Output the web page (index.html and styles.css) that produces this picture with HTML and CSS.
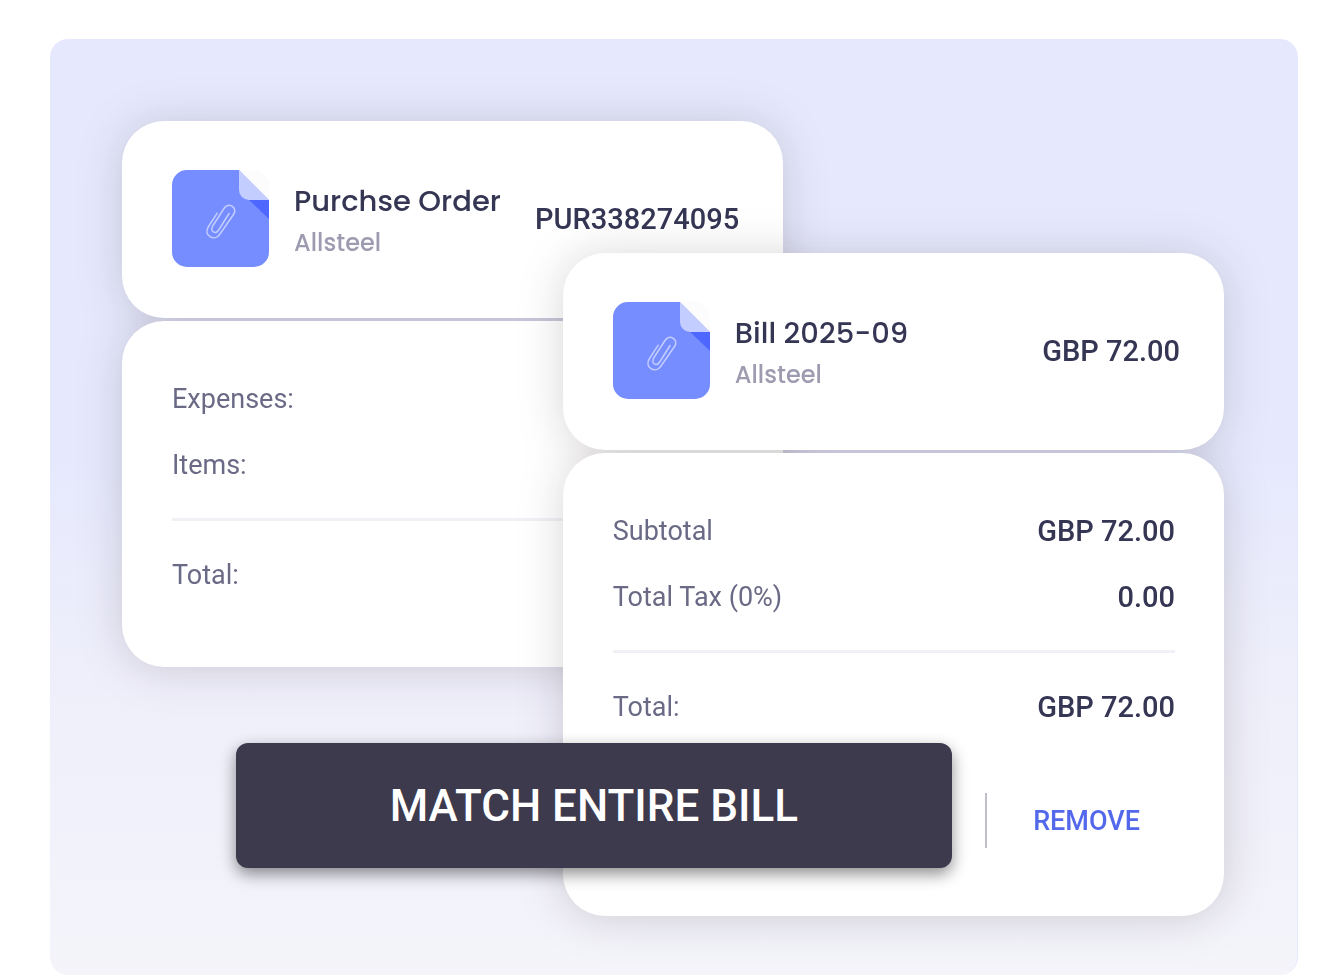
FILE: index.html
```
<!DOCTYPE html>
<html lang="en">
    <head>
        <meta charset="UTF-8">
        <meta name="viewport" content="width=device-width, initial-scale=1.0">
        <title>Match bill</title>
        <link rel="stylesheet" href="styles.css">
    </head>
    <body>
        <svg width="0" height="0" class="symbols" aria-hidden="true">
            <symbol id="file-icon" viewBox="0 0 97 97">
                <path fill="#768dff" d="M15 0H67L97 30V82A15 15 0 0 1 82 97H15A15 15 0 0 1 0 82V15A15 15 0 0 1 15 0Z"/>
                <path fill="#fcfcfd" d="M67 0H82A15 15 0 0 1 97 15V30Z"/>
                <path fill="#4e68ff" d="M77 30H97V49Z"/>
                <path fill="#c3cdff" d="M67 0L97 30H77A10 10 0 0 1 67 20Z"/>
                <path fill="none" stroke="#c3cdff" stroke-width="1.5" stroke-linecap="round" stroke-linejoin="round"
                    d="M45.2 43.2L36.5 56.5C34 60.5 34.500 64.500 38 66.700C41.500 68.800 45.500 67.800 48 64L61.500 44.500C63.500 41.500 63.200 38.200 60.300 36.300C57.300 34.500 54 35.500 52 38.500L41 55.500C39.200 58.300 39.500 60.800 41.300 61.900C43.200 63 45.200 62.300 46.700 60L57 43.500"/>
            </symbol>
        </svg>

        <main class="panel">
            <div class="stage">
                <section class="document order">
                    <header class="card document-head">
                        <svg class="file-icon" aria-hidden="true"><use href="#file-icon"/></svg>
                        <div class="document-name">
                            <h2>Purchse Order</h2>
                            <p>Allsteel</p>
                        </div>
                        <span class="amount">PUR338274095</span>
                    </header>
                    <div class="card document-body">
                        <dl>
                            <div class="row"><dt>Expenses:</dt><dd></dd></div>
                            <div class="row"><dt>Items:</dt><dd></dd></div>
                            <div class="row total"><dt>Total:</dt><dd></dd></div>
                        </dl>
                    </div>
                </section>

                <section class="document bill">
                    <header class="card document-head">
                        <svg class="file-icon" aria-hidden="true"><use href="#file-icon"/></svg>
                        <div class="document-name">
                            <h2>Bill 2025-09</h2>
                            <p>Allsteel</p>
                        </div>
                        <span class="amount">GBP 72.00</span>
                    </header>
                    <div class="card document-body">
                        <dl>
                            <div class="row"><dt>Subtotal</dt><dd>GBP 72.00</dd></div>
                            <div class="row"><dt>Total Tax (0%)</dt><dd>0.00</dd></div>
                            <div class="row total"><dt>Total:</dt><dd>GBP 72.00</dd></div>
                        </dl>
                        <div class="actions">
                            <button type="button" class="remove-button">REMOVE</button>
                        </div>
                    </div>
                </section>

                <button type="button" class="match-button">MATCH ENTIRE BILL</button>
            </div>
        </main>
    </body>
</html>
```

FILE: styles.css
```
* {
    box-sizing: border-box;
}
body {
    margin: 0;
    background: #fff;
    color: #353554;
    font-family: Roboto, sans-serif;
}
h2, p, dl, dd {
    margin: 0;
}
button {
    border: none;
    font-family: inherit;
    font-weight: 500;
    cursor: pointer;
}
.symbols {
    position: absolute;
}
.panel {
    margin: 39px 40px 0 50px;
    padding: 82px 73px 59px 72px;
    border-right: 1px solid #e6e9fd;
    border-radius: 18px;
    background: linear-gradient(#e6e9fd 0%, #e6e9fd 45%, #efeffb 68%, #f1f1fb 84%, #f4f4fa 100%);
}
.stage {
    position: relative;
    display: grid;
    grid-template-columns: 2fr 1fr 2fr;
    align-items: start;
}
.document {
    display: grid;
    gap: 3px;
    grid-row: 1;
    filter: drop-shadow(0 2px 22px rgba(30, 10, 20, 0.17));
}
.order {
    grid-column: 1 / 3;
}
.bill {
    grid-column: 2 / 4;
    margin-top: 132px;
}
.card {
    border-radius: 42px;
    background: #fff;
}
.document-head {
    display: flex;
    align-items: center;
    gap: 25px;
    padding: 49px 44px 51px 50px;
}
.file-icon {
    flex: none;
    width: 97px;
    height: 97px;
}
.document-name {
    flex: 1;
    padding-top: 6px;
    font-family: Poppins, Inter, sans-serif;
    white-space: nowrap;
}
.document-name h2 {
    font-size: 29px;
    line-height: 42px;
    font-weight: 500;
}
.document-name p {
    color: #9d9bb0;
    font-size: 24px;
    line-height: 42px;
    font-weight: 500;
}
.amount, dd {
    font-size: 29px;
    font-weight: 500;
}
.document-body {
    padding: 45px 49px 59px 50px;
}
.row {
    display: flex;
    align-items: center;
    justify-content: space-between;
    line-height: 66px;
}
.row dt {
    color: #6a6a86;
    font-size: 27px;
}
.total {
    margin-top: 20px;
    padding-top: 21px;
    border-top: 3px solid #f1f1f5;
}
.actions {
    display: flex;
    justify-content: flex-end;
    margin-top: 53px;
    padding: 0 35px 9px 0;
}
.remove-button {
    height: 55px;
    padding: 0 0 0 46px;
    border-left: 2px solid #bfbeca;
    background: none;
    color: #5468ec;
    font-size: 27px;
}
.match-button {
    position: absolute;
    right: 272px;
    bottom: 48px;
    width: 65%;
    height: 125px;
    border-radius: 12px;
    background: #3d3a4d;
    color: #fff;
    font-size: 44px;
    box-shadow: 0 6px 16px rgba(0, 0, 0, 0.45);
}
```
